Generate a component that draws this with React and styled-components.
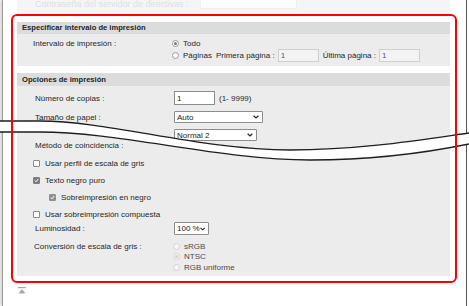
import React from "react";
import styled, { createGlobalStyle } from "styled-components";

const Global = createGlobalStyle`
  html, body { margin: 0; padding: 0; background: #fff; }
  body {
    font-family: "Liberation Sans", Arial, sans-serif;
    font-size: 8px;
    color: #262626;
  }
`;

const Page = styled.div`
  position: relative;
  width: 469px;
  height: 306px;
  overflow: hidden;
  background: #fff;
`;

const Frame = styled.div`
  margin-left: 2px;
  width: 465px;
  height: 306px;
  box-sizing: border-box;
  border-left: 1px solid #9a9a9a;
  border-right: 1px solid #555;
  box-shadow: -2px 0 2px #d8d8d8;
`;

const TopStrip = styled.div`
  margin-left: 14px;
  width: 433px;
  height: 13px;
  background: #f5f5f5;
  display: flex;
  align-items: flex-start;
  color: #e0e0e0;
  overflow: hidden;
  span {
    padding-left: 18px;
    width: 165px;
    font-size: 9px;
    line-height: 9px;
    white-space: nowrap;
  }
`;

const FadedInput = styled.div`
  width: 95px;
  height: 8px;
  background: #fff;
  border: 1px solid #efefef;
  border-top: none;
`;

const Highlight = styled.div`
  position: relative;
  margin-left: 8px;
  margin-top: 1px;
  width: 446px;
  height: 269px;
  box-sizing: border-box;
  padding: 8px 7px 7px 6px;
  display: flex;
  flex-direction: column;
  gap: 7px;
  &::after {
    content: "";
    position: absolute;
    inset: 0;
    border: 2px solid #ff0000;
    border-radius: 6px;
    z-index: 2;
    pointer-events: none;
  }
`;

const Section = styled.div`
  background: #ececec;
  display: flex;
  flex-direction: column;
  flex: ${(p) => (p.$grow ? 1 : "none")};
`;

const Header = styled.div`
  height: ${(p) => p.$h}px;
  background: #dcdcdc;
  padding-left: 5px;
  font-weight: bold;
  font-size: 7.6px;
  color: #1e1e1e;
  line-height: ${(p) => p.$h}px;
`;

const Body = styled.div`
  padding: ${(p) => p.$pad};
  display: flex;
  flex-direction: column;
`;

const Row = styled.div`
  display: grid;
  grid-template-columns: 139px 1fr;
  align-items: ${(p) => (p.$top ? "start" : "center")};
  height: ${(p) => p.$h}px;
  margin-top: ${(p) => p.$mt || 0}px;
  padding-left: ${(p) => p.$indent || 17}px;
`;

const Label = styled.div`
  white-space: nowrap;
  color: #262626;
  margin-top: ${(p) => p.$mt || 0}px;
`;

const Controls = styled.div`
  display: flex;
  align-items: center;
  white-space: nowrap;
`;

const Radio = styled.span`
  width: 7px;
  height: 7px;
  box-sizing: border-box;
  border-radius: 50%;
  border: 1px solid ${(p) => (p.$disabled ? "#d4d4d4" : "#9a9a9a")};
  background: ${(p) => (p.$disabled ? "#f6f6f6" : "#fff")};
  display: inline-flex;
  align-items: center;
  justify-content: center;
  margin-right: 4px;
  flex: none;
  &::after {
    content: "";
    width: 3px;
    height: 3px;
    border-radius: 50%;
    background: ${(p) => (p.$disabled ? "#cfcfcf" : "#7a7a7a")};
    display: ${(p) => (p.$on ? "block" : "none")};
  }
`;

const Text = styled.span`
  color: ${(p) => (p.$muted ? "#4a4a4a" : "#262626")};
  margin-right: ${(p) => p.$mr || 0}px;
`;

const Field = styled.div`
  width: ${(p) => p.$w}px;
  height: ${(p) => p.$h}px;
  box-sizing: border-box;
  border: 1px solid ${(p) => (p.$disabled ? "#cfcfcf" : "#8c8c8c")};
  background: ${(p) => (p.$disabled ? "#f3f3f3" : "#fff")};
  padding-left: 2px;
  display: flex;
  align-items: center;
  color: ${(p) => (p.$disabled ? "#3b5b8c" : "#222")};
  margin-right: ${(p) => p.$mr || 0}px;
  flex: none;
`;

const SelectBox = styled.div`
  width: ${(p) => p.$w}px;
  height: ${(p) => p.$h}px;
  box-sizing: border-box;
  border: 1px solid #8c8c8c;
  border-radius: 1px;
  background: #fff;
  display: flex;
  align-items: center;
  justify-content: space-between;
  padding: 0 3px 0 2px;
  color: #222;
`;

const CheckRow = styled.div`
  display: flex;
  align-items: center;
  height: 16px;
  margin-top: ${(p) => p.$mt || 0}px;
  padding-left: ${(p) => p.$indent}px;
`;

const Box = styled.span`
  width: 7px;
  height: 7px;
  box-sizing: border-box;
  border: 1px solid ${(p) => (p.$on ? p.$tone : "#8a8a8a")};
  background: ${(p) => (p.$on ? p.$tone : "#fff")};
  border-radius: 1px;
  margin-right: 5px;
  display: inline-flex;
  align-items: center;
  justify-content: center;
  flex: none;
`;

const RadioStack = styled.div`
  display: flex;
  flex-direction: column;
`;

const RadioLine = styled.div`
  display: flex;
  align-items: center;
  height: 10.5px;
`;

const Footer = styled.div`
  margin: 4px 0 0 15px;
  height: 8px;
`;

const Wave = styled.svg`
  position: absolute;
  left: 0;
  top: 0;
  z-index: 1;
  pointer-events: none;
`;

const Chevron = () => (
  <svg width="6" height="4" viewBox="0 0 6 4">
    <path d="M0.6 0.7 L3 3 L5.4 0.7" fill="none" stroke="#222" strokeWidth="1.2" />
  </svg>
);

const Tick = () => (
  <svg width="5" height="5" viewBox="0 0 5 5">
    <path d="M0.8 2.6 L2 3.8 L4.2 1" fill="none" stroke="#fff" strokeWidth="1" />
  </svg>
);

const Select = ({ w, h, value }) => (
  <SelectBox $w={w} $h={h}>
    <span>{value}</span>
    <Chevron />
  </SelectBox>
);

const Check = ({ indent, mt, on, tone = "#7d7d7d", children }) => (
  <CheckRow $indent={indent} $mt={mt}>
    <Box $on={on} $tone={tone}>{on && <Tick />}</Box>
    <Text>{children}</Text>
  </CheckRow>
);

const topLine = "M0 121 L40 121 C110 121 200 150 290 150 C360 150 420 140 469 133";
const bottomLine = "M0 132 L40 132 C120 132 220 160 310 160 C380 160 430 152 469 144";

export default function App() {
  return (
    <Page>
      <Global />
      <Frame>
        <TopStrip>
          <span>Contraseña del servidor de directivas :</span>
          <FadedInput />
        </TopStrip>

        <Highlight>
          <Section>
            <Header $h={12}>Especificar intervalo de impresión</Header>
            <Body $pad="4px 0 4px">
              <Row $h={11} $indent={16}>
                <Label>Intervalo de impresión :</Label>
                <Controls>
                  <Radio $on />
                  <Text>Todo</Text>
                </Controls>
              </Row>
              <Row $h={13} $indent={16}>
                <Label />
                <Controls>
                  <Radio />
                  <Text $mr={4}>Páginas</Text>
                  <Text $mr={3}>Primera página :</Text>
                  <Field $w={41} $h={13} $mr={4} $disabled>1</Field>
                  <Text $mr={3}>Última página :</Text>
                  <Field $w={41} $h={13} $disabled>1</Field>
                </Controls>
              </Row>
            </Body>
          </Section>

          <Section $grow>
            <Header $h={13}>Opciones de impresión</Header>
            <Body $pad="5px 0 0">
              <Row $h={14} $indent={18}>
                <Label>Número de copias :</Label>
                <Controls>
                  <Field $w={41} $h={14} $mr={4}>1</Field>
                  <Text>(1- 9999)</Text>
                </Controls>
              </Row>
              <Row $h={12} $mt={6} $indent={18}>
                <Label>Tamaño de papel :</Label>
                <Controls>
                  <Select w={89} h={12} value="Auto" />
                </Controls>
              </Row>
              <Row $h={12} $mt={6} $indent={18}>
                <Label />
                <Controls>
                  <Select w={83} h={12} value="Normal 2" />
                </Controls>
              </Row>
              <Row $h={7} $indent={18}>
                <Label>Método de coincidencia :</Label>
              </Row>
              <Check indent={16} mt={7}>Usar perfil de escala de gris</Check>
              <Check indent={16} mt={1} on>Texto negro puro</Check>
              <Check indent={32} mt={1} on tone="#8f8f8f">Sobreimpresión en negro</Check>
              <Check indent={16} mt={1}>Usar sobreimpresión compuesta</Check>
              <Row $h={13} $indent={18}>
                <Label>Luminosidad :</Label>
                <Controls>
                  <Select w={35} h={13} value="100 %" />
                </Controls>
              </Row>
              <Row $h={32} $mt={6} $indent={17} $top>
                <Label $mt={1}>Conversión de escala de gris :</Label>
                <RadioStack>
                  <RadioLine>
                    <Radio $disabled />
                    <Text $muted>sRGB</Text>
                  </RadioLine>
                  <RadioLine>
                    <Radio $disabled $on />
                    <Text $muted>NTSC</Text>
                  </RadioLine>
                  <RadioLine>
                    <Radio $disabled />
                    <Text $muted>RGB uniforme</Text>
                  </RadioLine>
                </RadioStack>
              </Row>
            </Body>
          </Section>
        </Highlight>

        <Footer>
          <svg width="8" height="7" viewBox="0 0 8 7">
            <rect x="0" y="0" width="8" height="1.2" fill="#a8a8a8" />
            <path d="M4 2 L7.5 6.5 L0.5 6.5 Z" fill="#a8a8a8" />
          </svg>
        </Footer>
      </Frame>

      <Wave width="469" height="306" viewBox="0 0 469 306">
        <path d={`${topLine} L469 144 C430 152 380 160 310 160 C220 160 120 132 40 132 L0 132 Z`} fill="#fff" />
        <path d={topLine} fill="none" stroke="#1e1e1e" strokeWidth="1.3" />
        <path d={bottomLine} fill="none" stroke="#1e1e1e" strokeWidth="1.3" />
      </Wave>
    </Page>
  );
}
